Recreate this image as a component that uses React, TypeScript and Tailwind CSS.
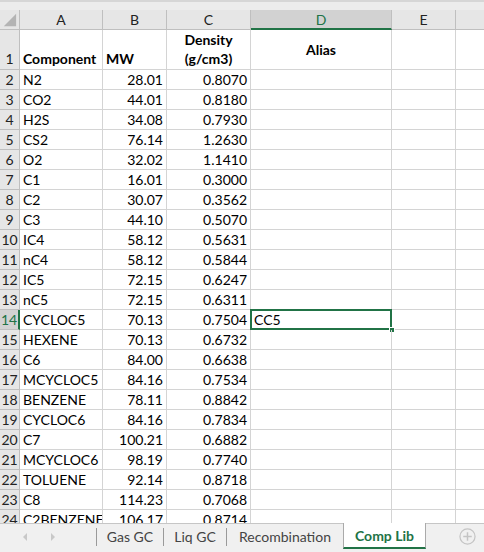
const rows: [string, string, string, string][] = [
  ['N2', '28.01', '0.8070', ''],
  ['CO2', '44.01', '0.8180', ''],
  ['H2S', '34.08', '0.7930', ''],
  ['CS2', '76.14', '1.2630', ''],
  ['O2', '32.02', '1.1410', ''],
  ['C1', '16.01', '0.3000', ''],
  ['C2', '30.07', '0.3562', ''],
  ['C3', '44.10', '0.5070', ''],
  ['IC4', '58.12', '0.5631', ''],
  ['nC4', '58.12', '0.5844', ''],
  ['IC5', '72.15', '0.6247', ''],
  ['nC5', '72.15', '0.6311', ''],
  ['CYCLOC5', '70.13', '0.7504', 'CC5'],
  ['HEXENE', '70.13', '0.6732', ''],
  ['C6', '84.00', '0.6638', ''],
  ['MCYCLOC5', '84.16', '0.7534', ''],
  ['BENZENE', '78.11', '0.8842', ''],
  ['CYCLOC6', '84.16', '0.7834', ''],
  ['C7', '100.21', '0.6882', ''],
  ['MCYCLOC6', '98.19', '0.7740', ''],
  ['TOLUENE', '92.14', '0.8718', ''],
  ['C8', '114.23', '0.7068', ''],
  ['C2BENZENE', '106.17', '0.8714', ''],
];

const SELECTED_ROW = 14;

function ColHeader() {
  return (
    <div className="flex h-[20px] shrink-0 bg-[#e6e6e6] text-[14px] text-[#222]">
      <div className="relative w-[20px] shrink-0 border-r border-b border-[#bfbfbf]">
        <svg viewBox="0 0 20 20" className="absolute inset-0 h-full w-full">
          <polygon points="17,4 17,17 4,17" fill="#b4b4b4" />
        </svg>
      </div>
      <div className="flex w-[83px] shrink-0 items-center justify-center border-r border-b border-[#bfbfbf]">A</div>
      <div className="flex w-[64px] shrink-0 items-center justify-center border-r border-b border-[#bfbfbf]">B</div>
      <div className="flex w-[84px] shrink-0 items-center justify-center border-r border-b border-[#bfbfbf]">C</div>
      <div className="flex w-[141px] shrink-0 items-center justify-center border-r border-[#bfbfbf] border-b-2 border-b-[#217346] bg-[#d2d2d2] text-[#217346]">D</div>
      <div className="flex w-[64px] shrink-0 items-center justify-center border-r border-b border-[#bfbfbf]">E</div>
      <div className="flex-1 border-b border-[#bfbfbf]" />
    </div>
  );
}

function TitleRow() {
  return (
    <div className="flex h-[40px] shrink-0 text-[14px] leading-[19px]">
      <div className="flex w-[20px] shrink-0 items-end justify-center border-r border-b border-[#bfbfbf] bg-[#e6e6e6] pb-px text-[#222]">1</div>
      <div className="flex w-[83px] shrink-0 items-end border-r border-b border-[#d4d4d4] pb-px pl-[3px] font-bold">Component</div>
      <div className="flex w-[64px] shrink-0 items-end border-r border-b border-[#d4d4d4] pb-px pl-[3px] font-bold">MW</div>
      <div className="flex w-[84px] shrink-0 flex-col items-center justify-end border-r border-b border-[#d4d4d4] pb-px font-bold">
        <span>Density</span>
        <span>(g/cm3)</span>
      </div>
      <div className="flex w-[141px] shrink-0 items-center justify-center border-r border-b border-[#d4d4d4] font-bold">Alias</div>
      <div className="w-[64px] shrink-0 border-r border-b border-[#d4d4d4]" />
      <div className="flex-1 border-b border-[#d4d4d4]" />
    </div>
  );
}

function DataRow({ n, cells }: { n: number; cells: [string, string, string, string] }) {
  const sel = n === SELECTED_ROW;
  return (
    <div className="flex h-[20px] shrink-0 text-[14px] leading-[19px]">
      <div
        className={
          sel
            ? 'flex w-[20px] shrink-0 items-center justify-center border-r-2 border-b border-[#bfbfbf] border-r-[#217346] bg-[#d2d2d2] text-[#217346]'
            : 'flex w-[20px] shrink-0 items-center justify-center border-r border-b border-[#bfbfbf] bg-[#e6e6e6] text-[#222]'
        }
      >
        {n}
      </div>
      <div className="w-[83px] shrink-0 overflow-hidden whitespace-nowrap border-r border-b border-[#d4d4d4] pl-[3px]">{cells[0]}</div>
      <div className="w-[64px] shrink-0 border-r border-b border-[#d4d4d4] pr-[3px] text-right">{cells[1]}</div>
      <div className="w-[84px] shrink-0 border-r border-b border-[#d4d4d4] pr-[3px] text-right">{cells[2]}</div>
      <div className="relative w-[141px] shrink-0 border-r border-b border-[#d4d4d4] pl-[3px]">
        {cells[3]}
        {sel && (
          <>
            <div className="absolute -top-px -left-px -right-px -bottom-px border-2 border-[#217346]" />
            <div className="absolute -right-[4px] -bottom-[4px] h-[6px] w-[6px] border border-white bg-[#217346]" />
          </>
        )}
      </div>
      <div className="w-[64px] shrink-0 border-r border-b border-[#d4d4d4]" />
      <div className="flex-1 border-b border-[#d4d4d4]" />
    </div>
  );
}

function TabBar() {
  return (
    <div className="flex h-[29px] shrink-0 border-t border-[#c6c6c6] bg-[#f0f0f0] text-[14px] text-[#444]">
      <div className="flex w-[96px] shrink-0 items-center gap-[20px] pb-[3px] pl-[21px]">
        <svg viewBox="0 0 8 10" className="h-[10px] w-[8px]">
          <polygon points="6,1 2,5 6,9" fill="#c8c8c8" />
        </svg>
        <svg viewBox="0 0 8 10" className="h-[10px] w-[8px]">
          <polygon points="2,1 6,5 2,9" fill="#c8c8c8" />
        </svg>
      </div>
      <div className="mt-[4px] mb-[6px] w-px bg-[#9a9a9a]" />
      <div className="flex w-[66px] items-center justify-center pb-[3px]">Gas GC</div>
      <div className="mt-[4px] mb-[6px] w-px bg-[#9a9a9a]" />
      <div className="flex w-[62px] items-center justify-center pb-[3px]">Liq GC</div>
      <div className="mt-[4px] mb-[6px] w-px bg-[#9a9a9a]" />
      <div className="flex w-[116px] items-center justify-center pb-[3px]">Recombination</div>
      <div className="-mt-px mb-[3px] flex w-[83px] items-center justify-center border-x border-[#aaaaaa] border-b-2 border-b-[#217346] bg-white font-bold text-[#217346]">
        Comp Lib
      </div>
      <div className="flex flex-1 items-center justify-end pb-[3px] pr-[8px]">
        <svg viewBox="0 0 18 18" className="h-[17px] w-[17px]">
          <circle cx="9" cy="9" r="8" fill="none" stroke="#c4c4c4" strokeWidth="1.3" />
          <path d="M9 4.5 V13.5 M4.5 9 H13.5" stroke="#c4c4c4" strokeWidth="1.6" />
        </svg>
      </div>
    </div>
  );
}

export default function App() {
  return (
    <div
      className="flex h-[552px] w-[484px] flex-col overflow-hidden bg-white text-black"
      style={{ fontFamily: 'Lato, "Open Sans", sans-serif' }}
    >
      <div className="flex h-[10px] shrink-0 border-t-2 border-[#d6d6d6] bg-[#ececec]" />
      <div className="flex min-h-0 flex-1 flex-col overflow-hidden">
        <ColHeader />
        <TitleRow />
        {rows.map((r, i) => (
          <DataRow key={i} n={i + 2} cells={r} />
        ))}
      </div>
      <TabBar />
    </div>
  );
}
